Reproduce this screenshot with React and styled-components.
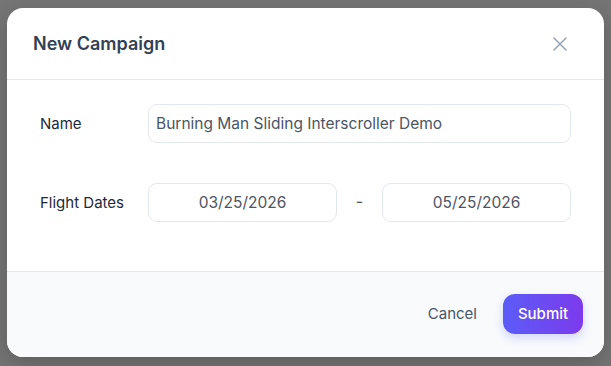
import styled, { createGlobalStyle } from "styled-components";

const GlobalStyle = createGlobalStyle`
  html, body {
    margin: 0;
    padding: 0;
    background: #757575;
    font-family: Inter, "Noto Sans", sans-serif;
  }
`;

const Overlay = styled.div`
  width: 611px;
  height: 366px;
  box-sizing: border-box;
  padding: 8px 7px 0 7px;
  background: #757575;
`;

const Modal = styled.div`
  width: 597px;
  height: 349px;
  background: #ffffff;
  border-radius: 16px;
  overflow: hidden;
  display: flex;
  flex-direction: column;
  box-shadow: 0 8px 24px rgba(0, 0, 0, 0.2);
`;

const Header = styled.div`
  height: 72px;
  box-sizing: border-box;
  display: flex;
  align-items: center;
  justify-content: space-between;
  padding: 0 36px 0 26px;
  border-bottom: 1px solid #e2e8f0;
`;

const Title = styled.h2`
  margin: 0;
  font-size: 18px;
  font-weight: 600;
  color: #334155;
`;

const CloseButton = styled.button`
  all: unset;
  width: 16px;
  height: 16px;
  display: flex;
  align-items: center;
  justify-content: center;
  color: #94a3b8;
`;

const Body = styled.div`
  flex: 1;
  padding: 24px 33px 0 33px;
  display: flex;
  flex-direction: column;
  gap: 40px;
`;

const Row = styled.div`
  display: flex;
  align-items: center;
`;

const Label = styled.label`
  width: 108px;
  flex-shrink: 0;
  font-size: 15px;
  color: #1f2937;
`;

const Field = styled.div`
  flex: 1;
  height: 39px;
  box-sizing: border-box;
  border: 1px solid #e2e8f0;
  border-radius: 9px;
  display: flex;
  align-items: center;
  justify-content: ${(p) => (p.$center ? "center" : "flex-start")};
  padding: 0 ${(p) => (p.$center ? "0" : "7px")};
  font-size: 15.5px;
  color: #4b5563;
`;

const Dates = styled.div`
  flex: 1;
  display: flex;
  align-items: center;
`;

const Dash = styled.span`
  width: 45px;
  text-align: center;
  font-size: 16px;
  color: #4b5563;
  margin-top: -3px;
`;

const Footer = styled.div`
  height: 86px;
  box-sizing: border-box;
  background: #f8fafc;
  border-top: 1px solid #e2e8f0;
  display: flex;
  align-items: center;
  justify-content: flex-end;
  gap: 26px;
  padding: 0 21px 2px 0;
`;

const CancelButton = styled.button`
  all: unset;
  font-size: 15px;
  font-weight: 400;
  color: #475569;
`;

const SubmitButton = styled.button`
  all: unset;
  width: 80px;
  height: 40px;
  box-sizing: border-box;
  border-radius: 12px;
  display: flex;
  align-items: center;
  justify-content: center;
  font-size: 15px;
  font-weight: 500;
  color: #ffffff;
  background: linear-gradient(90deg, #5b5cf8 0%, #7c3aed 100%);
  box-shadow: 0 4px 10px rgba(99, 102, 241, 0.25);
`;

export default function App() {
  return (
    <>
      <GlobalStyle />
      <Overlay>
        <Modal>
          <Header>
            <Title>New Campaign</Title>
            <CloseButton aria-label="Close">
              <svg width="14" height="14" viewBox="0 0 14 14" fill="none" stroke="currentColor" strokeWidth="1.5" strokeLinecap="round">
                <path d="M1 1L13 13M13 1L1 13" />
              </svg>
            </CloseButton>
          </Header>
          <Body>
            <Row>
              <Label>Name</Label>
              <Field>Burning Man Sliding Interscroller Demo</Field>
            </Row>
            <Row>
              <Label>Flight Dates</Label>
              <Dates>
                <Field $center>03/25/2026</Field>
                <Dash>-</Dash>
                <Field $center>05/25/2026</Field>
              </Dates>
            </Row>
          </Body>
          <Footer>
            <CancelButton>Cancel</CancelButton>
            <SubmitButton>Submit</SubmitButton>
          </Footer>
        </Modal>
      </Overlay>
    </>
  );
}
